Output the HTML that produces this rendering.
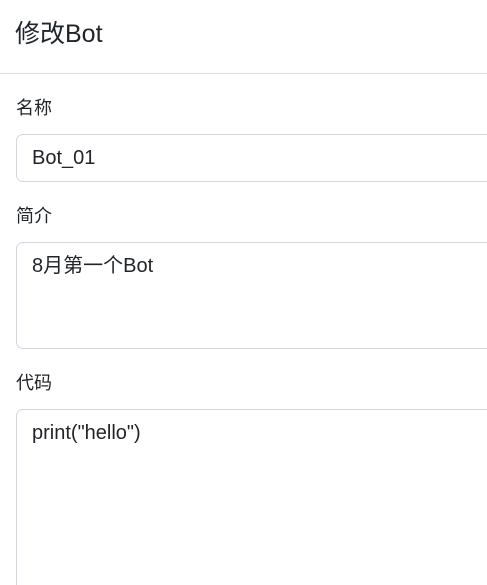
<!DOCTYPE html>
<html style="overflow:hidden;height:585px"><head><meta charset="utf-8"><style>
body{margin:0;width:487px;height:585px;overflow:hidden;background:#fff;font-family:"Liberation Sans","Noto Sans CJK SC",sans-serif;color:#212529;position:relative}
.t{position:absolute;left:15px;top:16px;font-size:25px;line-height:36px}
.hr{position:absolute;left:0;right:0;top:73px;border-top:1px solid #dee2e6}
.l{position:absolute;left:16px;font-size:18px;line-height:24px}
.b{position:absolute;left:16px;width:500px;border:1px solid #d3d7db;border-radius:7px;box-sizing:border-box;font-size:20px;padding:8px 15px;line-height:30px}
</style></head><body>
<div class="t">修改Bot</div>
<div class="hr"></div>
<div class="l" style="top:96px">名称</div>
<div class="b" style="top:134px;height:48px">Bot_01</div>
<div class="l" style="top:204px">简介</div>
<div class="b" style="top:242px;height:107px">8月第一个Bot</div>
<div class="l" style="top:371px">代码</div>
<div class="b" style="top:409px;height:186px">print("hello")</div>
</body></html>
